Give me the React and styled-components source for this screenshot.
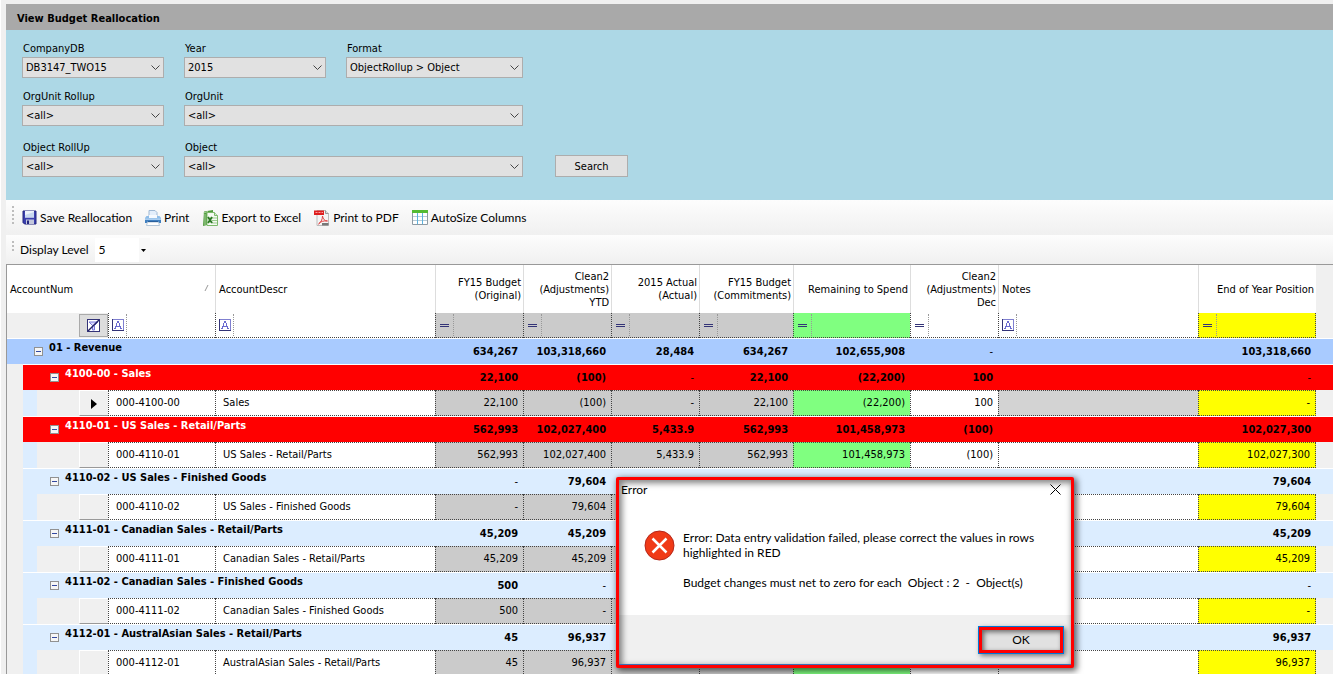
import { useState } from 'react';
import styled, { createGlobalStyle } from 'styled-components';

const GlobalStyle = createGlobalStyle`
  * {
    box-sizing: border-box;
  }

  body {
    margin: 0;
    background: #f0f0f0;
    color: #000;
    font-family: "DejaVu Sans Condensed", "DejaVu Sans", sans-serif;
    font-size: 11px;
    line-height: 13px;
  }

  button, select, input {
    font: inherit;
    color: inherit;
  }
`;

const Page = styled.main`
  display: flex;
  flex-direction: column;
  height: 100vh;
  padding: 4px 0 0 5px;
  border-left: 1px solid #fff;
  overflow: hidden;
`;

const Title = styled.h1`
  flex: none;
  margin: 0;
  padding: 8px 11px 5px;
  background: #a9a9a9;
  font-size: 11px;
  line-height: 13px;
`;

const Filters = styled.form`
  flex: none;
  display: grid;
  grid-template-columns: 142px 142px 177px auto;
  grid-template-rows: 36px 39px 36px;
  justify-content: start;
  align-items: start;
  column-gap: 20px;
  row-gap: 12px;
  padding: 12px 16px 23px;
  background: #add8e6;
`;

const Field = styled.div`
  display: flex;
  flex-direction: column;
  gap: 2px;
  grid-column: span ${({ $span }) => $span || 1};

  label {
    padding: 0 1px;
    line-height: 13px;
  }
`;

const SelectBox = styled.div`
  position: relative;

  select {
    appearance: none;
    display: block;
    width: 100%;
    height: 21px;
    padding: 0 20px 0 3px;
    border: 1px solid #adadad;
    border-radius: 0;
    background: #e1e1e1;
  }

  svg {
    position: absolute;
    top: 8px;
    right: 4px;
    pointer-events: none;
  }
`;

const SearchButton = styled.button`
  align-self: end;
  width: 73px;
  height: 22px;
  margin-left: 12px;
  padding: 0;
  border: 1px solid #adadad;
  background: #e1e1e1;
`;

const Toolbar = styled.div`
  flex: none;
  display: flex;
  align-items: center;
  gap: ${({ $gap }) => $gap};
  height: ${({ $height }) => $height};
  padding-left: 6px;
  background: linear-gradient(#fdfdfd, #f0f0f0);
  font-family: Lato, "Open Sans", sans-serif;
  font-size: 12px;
  line-height: 16px;
`;

const Grip = styled.span`
  align-self: flex-start;
  width: 2px;
  height: ${({ $height }) => $height};
  margin-top: 6px;
  background: repeating-linear-gradient(#bdbdbd 0 2px, transparent 2px 4px);
`;

const Tools = styled.div`
  display: flex;
  align-items: center;
  gap: 13px;
`;

const Tool = styled.button`
  display: flex;
  align-items: center;
  gap: 3px;
  padding: 0;
  border: 0;
  background: none;
`;

const LevelBox = styled.div`
  position: relative;

  select {
    appearance: none;
    width: 55px;
    height: 24px;
    padding: 0 4px;
    border: 0;
    background: linear-gradient(to right, #fff 44px, #f8f8f8 44px);
  }

  svg {
    position: absolute;
    top: 11px;
    right: 4px;
    pointer-events: none;
  }
`;

const GridPanel = styled.section`
  flex: 1;
  min-height: 0;
  overflow: hidden;
  border-top: 1px solid #999;
  border-left: 1px solid #999;
`;

const Table = styled.table`
  width: 100%;
  table-layout: fixed;
  border-collapse: separate;
  border-spacing: 0;

  th, td {
    padding: 0;
  }
`;

const HeadCell = styled.th`
  height: 48px;
  padding: 0 2px 0 3px !important;
  border-left: ${({ $first }) => ($first ? 0 : '1px solid #ddd')};
  background: #fff;
  font-weight: 400;
  text-align: ${({ $align }) => $align || 'right'};
  white-space: pre-line;
`;

const SortHead = styled.div`
  display: flex;
  justify-content: space-between;
  padding-right: 4px;
`;

const FilterCell = styled.td`
  height: 25px;
  border-left: 1px dotted #444;
  border-bottom: 1px dotted #444;
  border-right: ${({ $last }) => ($last ? '1px dotted #444' : 0)};
  background: ${({ $fill }) => $fill || '#fff'};
`;

const Operator = styled.button`
  display: flex;
  align-items: center;
  justify-content: center;
  width: 18px;
  height: 22px;
  padding: 0;
  border: 0;
  border-right: 1px dotted #999;
  background: none;
`;

const ClearFilter = styled.button`
  display: flex;
  align-items: center;
  justify-content: center;
  width: 100%;
  height: 23px;
  padding: 0;
  border: 1px solid #aaa;
  background: #ddd;
`;

const GroupRow = styled.tr`
  font-weight: 700;

  td {
    height: 26px;
    padding-right: 5px;
    border-top: 1px solid #fff;
    background: ${({ $fill }) => $fill};
    text-align: right;
  }

  td.indent {
    border-top: 0;
    background: #f0f0f0;
  }

  td.empty {
    font-weight: 400;
  }
`;

const GroupLabel = styled.div`
  display: flex;
  gap: 6px;
  height: 25px;
  padding: 2px 0 0 27px;
  color: ${({ $light }) => ($light ? '#fff' : '#000')};
  white-space: nowrap;

  button {
    display: block;
    width: 9px;
    height: 9px;
    margin-top: 6px;
    padding: 0;
    border: 0;
    background: none;
  }

  svg {
    display: block;
  }
`;

const Indent = styled.td`
  background: ${({ $fill }) => $fill || '#f0f0f0'};
`;

const Selector = styled.td`
  border-top: 1px solid #fff;
  border-left: 1px solid #fff;
  border-bottom: 1px solid #999;
  background: #f0f0f0;

  svg {
    display: block;
    margin: 1px 0 0 11px;
  }
`;

const Cell = styled.td`
  height: 26px;
  padding: ${({ $text }) => ($text ? '0 0 2px 7px' : '0 5px 2px 0')} !important;
  border: 1px dotted #444;
  border-right-width: ${({ $last }) => ($last ? '1px' : 0)};
  background: ${({ $fill }) => $fill || '#fff'};
  text-align: ${({ $text }) => ($text ? 'left' : 'right')};
  white-space: nowrap;
`;

const Dialog = styled.div`
  position: absolute;
  top: 477px;
  left: 616px;
  display: flex;
  flex-direction: column;
  width: 458px;
  height: 191px;
  border: 3px solid #f00;
  border-radius: 2px;
  background: #fff;
  box-shadow: 2px 2px 6px 1px rgba(0, 0, 0, .6), inset 2px 2px 6px 1px rgba(0, 0, 0, .5);
  font-family: Lato, "Open Sans", sans-serif;
  font-size: 12px;
  line-height: 15px;
`;

const DialogTitle = styled.div`
  display: flex;
  justify-content: space-between;
  align-items: center;
  padding: 2px 10px 2px 2px;

  button {
    display: flex;
    padding: 0;
    border: 0;
    background: none;
  }
`;

const DialogBody = styled.div`
  flex: 1;
  display: flex;
  gap: 8px;
  padding: 31px 8px 0 25px;

  p {
    margin: 0 0 15px;
    white-space: pre-wrap;
  }
`;

const DialogFooter = styled.div`
  display: flex;
  justify-content: flex-end;
  align-items: center;
  height: 50px;
  padding-right: 8px;
  border-bottom: 1px solid #3c6eb4;
  background: rgba(0, 0, 0, .06);
`;

const OkButton = styled.button`
  width: 84px;
  height: 26px;
  padding: 0;
  border: 3px solid #f00;
  background: #e1e1e1;
  box-shadow: 0 0 0 1px #0078d7, 2px 2px 5px 1px rgba(0, 0, 0, .5), inset 2px 2px 5px rgba(0, 0, 0, .55);
`;

const GREY = '#cbcbcb';
const GREEN = '#80ff80';
const YELLOW = '#ffff00';

const widths = [16, 14, 42, 29, 107, 220, 88, 88, 88, 94, 117, 88, 200, 118];

const columns = [
  { name: 'FY15 Budget\n(Original)', fill: GREY },
  { name: 'Clean2\n(Adjustments)\nYTD', fill: GREY },
  { name: '2015 Actual\n(Actual)', fill: GREY },
  { name: 'FY15 Budget\n(Commitments)', fill: GREY },
  { name: 'Remaining to Spend', fill: GREEN },
  { name: 'Clean2\n(Adjustments)\nDec', fill: '#fff' },
  { name: 'Notes', fill: '#fff', text: true },
  { name: 'End of Year Position', fill: YELLOW },
];

const revenue = ['634,267', '103,318,660', '28,484', '634,267', '102,655,908', '-', '', '103,318,660'];

const accounts = [
  {
    group: '4100-00 - Sales',
    num: '000-4100-00',
    descr: 'Sales',
    values: ['22,100', '(100)', '-', '22,100', '(22,200)', '100', '', '-'],
    invalid: true,
    current: true,
  },
  {
    group: '4110-01 - US Sales - Retail/Parts',
    num: '000-4110-01',
    descr: 'US Sales - Retail/Parts',
    values: ['562,993', '102,027,400', '5,433.9', '562,993', '101,458,973', '(100)', '', '102,027,300'],
    invalid: true,
  },
  {
    group: '4110-02 - US Sales - Finished Goods',
    num: '000-4110-02',
    descr: 'US Sales - Finished Goods',
    values: ['-', '79,604', '', '', '', '', '', '79,604'],
  },
  {
    group: '4111-01 - Canadian Sales - Retail/Parts',
    num: '000-4111-01',
    descr: 'Canadian Sales - Retail/Parts',
    values: ['45,209', '45,209', '', '', '', '', '', '45,209'],
  },
  {
    group: '4111-02 - Canadian Sales - Finished Goods',
    num: '000-4111-02',
    descr: 'Canadian Sales - Finished Goods',
    values: ['500', '-', '', '', '', '', '', '-'],
  },
  {
    group: '4112-01 - AustralAsian Sales - Retail/Parts',
    num: '000-4112-01',
    descr: 'AustralAsian Sales - Retail/Parts',
    values: ['45', '96,937', '', '', '', '', '', '96,937'],
  },
];

function SaveIcon() {
  return (
    <svg width="15" height="15" viewBox="0 0 15 15">
      <path d="M1 1h13v13H2.500L1 12.500z" fill="#3b3fae" stroke="#24277f" />
      <path d="M3 1h9v6.500H3z" fill="#eef3fb" />
      <path d="M3 5l9-3v5.500H3z" fill="#c9d8f0" />
      <path d="M4 9.500h8V14H4z" fill="#c4c8dc" />
      <path d="M5 10.500h2V14H5z" fill="#24277f" />
    </svg>
  );
}

function PrintIcon() {
  return (
    <svg width="16" height="16" viewBox="0 0 16 16">
      <path d="M4 0.500h6l2 2V8H4z" fill="#e3eefb" stroke="#9fb8d4" />
      <path d="M1.500 6h13L16 8v5H0V8z" fill="#8fbde8" />
      <path d="M0 9h16v4H0z" fill="#3f7fc0" />
      <path d="M0 8.500h16v1.500H0z" fill="#a9cdf0" />
      <path d="M4 5h8v3H4z" fill="#f5f9fe" />
      <path d="M2.500 12h11l1 3.500h-13z" fill="#fff" stroke="#b4c6d8" />
      <path d="M3 11.500h10" stroke="#2a5f9c" />
    </svg>
  );
}

function ExcelIcon() {
  return (
    <svg width="16" height="16" viewBox="0 0 16 16">
      <path d="M2 1.500 11 0v3L5 4v11l-4 1z" fill="#4f9a3c" />
      <path d="M1.500 3 6 1.500M3 4v11" stroke="#a9d39c" />
      <path d="M5 2.500h7.500l3 3v10H5z" fill="#f6faf4" stroke="#7dba6c" />
      <path d="M12.500 2.500v3h3" fill="#d4e9cd" stroke="#7dba6c" />
      <path d="M10 8h5M10 10.500h5M10 13h5" stroke="#9ccb8f" />
      <path d="M6 7l4 6M10 7l-4 6" stroke="#2d7a25" strokeWidth="2" />
    </svg>
  );
}

function PdfIcon() {
  return (
    <svg width="16" height="16" viewBox="0 0 16 16">
      <path d="M3 0.500h8.500l3 3v12H3z" fill="#f4f4f4" stroke="#bbb" />
      <path d="M11.500 0.500v3h3" fill="#ddd" stroke="#999" />
      <path d="M0 0.500h10V5H0z" fill="#dd1f1f" />
      <path d="M1.500 2.500h2M4.500 2.500h2M7.500 2.500h1.500" stroke="#ff9d9d" />
      <path d="M8.500 6c0 4-2 6.500-4 8 2-2.500 5-3.500 9-3-3 0-4.500-2-5-5" fill="none" stroke="#e04343" />
      <path d="M8 13h6.500v2.500H8z" fill="#777" />
    </svg>
  );
}

function TableIcon() {
  return (
    <svg width="16" height="15" viewBox="0 0 16 15">
      <path d="M0.500 0.500h15v14H.5z" fill="#fff" stroke="#8d9aa3" />
      <path d="M0 0h16v3H0z" fill="#55bb33" />
      <path d="M1 6.500h14M1 10.500h14" stroke="#b9cbd6" />
      <path d="M5.500 3v11M10.500 3v11" stroke="#5bb2de" />
    </svg>
  );
}

function LetterIcon() {
  return (
    <svg width="12" height="12" viewBox="0 0 12 12" shapeRendering="crispEdges">
      <rect x="0.500" y="0.500" width="11" height="11" fill="#fff" stroke="#8080d0" />
      <path d="M.5 0v11.500H12" fill="none" stroke="#333377" />
      <path d="M3 9.500 5.500 2.500h1L9 9.500M4 7.500h4M2 9.500h2M7.500 9.500H10" fill="none" stroke="#6b6bd0" />
    </svg>
  );
}

function EqualsIcon() {
  return (
    <svg width="9" height="5" viewBox="0 0 9 5" shapeRendering="crispEdges">
      <path d="M0 1.500h9M0 3.500h9" stroke="#333377" />
    </svg>
  );
}

function ClearFilterIcon() {
  return (
    <svg width="13" height="13" viewBox="0 0 13 13">
      <rect x="0.500" y="0.500" width="12" height="12" fill="#fff" stroke="#333377" />
      <path d="M2 3h9L7.500 6.500V11H5.500V6.500z" fill="#dcdcff" stroke="#7777dd" />
      <path d="M1 12 12 1" stroke="#222266" strokeWidth="1.500" />
    </svg>
  );
}

function CollapseIcon() {
  return (
    <svg width="9" height="9" viewBox="0 0 9 9" shapeRendering="crispEdges">
      <rect x="0.500" y="0.500" width="8" height="8" fill="#f6f6f6" stroke="#919191" />
      <path d="M2 4.500h5" stroke="#3348a0" />
    </svg>
  );
}

function Combo({
  id, label, options, span,
}) {
  return (
    <Field $span={span}>
      <label htmlFor={id}>{label}</label>
      <SelectBox>
        <select id={id}>
          {options.map((option) => <option key={option}>{option}</option>)}
        </select>
        <svg width="9" height="6" viewBox="0 0 9 6">
          <path d="M.5.5l4 4 4-4" fill="none" stroke="#444" />
        </svg>
      </SelectBox>
    </Field>
  );
}

function GroupCells({ values }) {
  return (
    <>
      {values.map((value, index) => (
        <td key={columns[index].name} className={value === '-' ? 'empty' : undefined}>
          {value}
        </td>
      ))}
      <td />
    </>
  );
}

function Account({ account }) {
  const {
    group, num, descr, values, invalid, current,
  } = account;

  return (
    <>
      <GroupRow $fill={invalid ? '#f00' : '#dcedff'}>
        <td className="indent" />
        <td colSpan={5}>
          <GroupLabel $light={invalid}>
            <button type="button" aria-label="Collapse"><CollapseIcon /></button>
            {group}
          </GroupLabel>
        </td>
        <GroupCells values={values} />
      </GroupRow>
      <tr>
        <Indent />
        <Indent $fill="#dcedff" />
        <Indent />
        <Selector>
          {current
            ? (
              <svg width="6" height="10" viewBox="0 0 6 10">
                <path d="M0 0l6 5-6 5z" />
              </svg>
            )
            : null}
        </Selector>
        <Cell $text>{num}</Cell>
        <Cell $text>{descr}</Cell>
        {values.map((value, index) => (
          <Cell
            key={columns[index].name}
            $fill={current && columns[index].text ? '#d3d3d3' : columns[index].fill}
            $last={index === columns.length - 1}
          >
            {value}
          </Cell>
        ))}
        <Indent />
      </tr>
    </>
  );
}

export default function App() {
  const [open, setOpen] = useState(true);

  const handleClose = () => {
    setOpen(false);
  };

  const handleSearch = (event) => {
    event.preventDefault();
  };

  return (
    <Page>
      <GlobalStyle />
      <Title>View Budget Reallocation</Title>
      <Filters onSubmit={handleSearch}>
        <Combo id="company" label="CompanyDB" options={['DB3147_TWO15']} />
        <Combo id="year" label="Year" options={['2015']} />
        <Combo id="format" label="Format" options={['ObjectRollup > Object']} />
        <span />
        <Combo id="org-rollup" label="OrgUnit Rollup" options={['<all>']} />
        <Combo id="org-unit" label="OrgUnit" options={['<all>']} span={2} />
        <span />
        <Combo id="object-rollup" label="Object RollUp" options={['<all>']} />
        <Combo id="object" label="Object" options={['<all>']} span={2} />
        <SearchButton type="submit">Search</SearchButton>
      </Filters>
      <Toolbar $height="35px" $gap="8px">
        <Grip $height="18px" />
        <Tools>
          <Tool type="button">
            <SaveIcon />
            Save Reallocation
          </Tool>
          <Tool type="button">
            <PrintIcon />
            Print
          </Tool>
          <Tool type="button">
            <ExcelIcon />
            Export to Excel
          </Tool>
          <Tool type="button">
            <PdfIcon />
            Print to PDF
          </Tool>
          <Tool type="button">
            <TableIcon />
            AutoSize Columns
          </Tool>
        </Tools>
      </Toolbar>
      <Toolbar $height="29px" $gap="6px">
        <Grip $height="10px" />
        <label htmlFor="level">Display Level</label>
        <LevelBox>
          <select id="level">
            <option>5</option>
          </select>
          <svg width="5" height="3" viewBox="0 0 5 3">
            <path d="M0 0h5L2.500 3z" />
          </svg>
        </LevelBox>
      </Toolbar>
      <GridPanel>
        <Table>
          <colgroup>
            {/* eslint-disable-next-line react/no-array-index-key */}
            {widths.map((width, index) => <col key={index} width={width} />)}
            <col />
          </colgroup>
          <thead>
            <tr>
              <HeadCell colSpan={5} $align="left" $first>
                <SortHead>
                  AccountNum
                  <svg width="5" height="9" viewBox="0 0 5 9">
                    <path d="M1 8l3-6" stroke="#999" />
                  </svg>
                </SortHead>
              </HeadCell>
              <HeadCell $align="left">AccountDescr</HeadCell>
              {columns.map(({ name, text }) => (
                <HeadCell key={name} $align={text ? 'left' : 'right'}>{name}</HeadCell>
              ))}
              <td />
            </tr>
            <tr>
              <td colSpan={3} />
              <td>
                <ClearFilter type="button" aria-label="Clear filters">
                  <ClearFilterIcon />
                </ClearFilter>
              </td>
              <FilterCell>
                <Operator type="button" aria-label="Filter AccountNum"><LetterIcon /></Operator>
              </FilterCell>
              <FilterCell>
                <Operator type="button" aria-label="Filter AccountDescr"><LetterIcon /></Operator>
              </FilterCell>
              {columns.map(({ name, fill, text }, index) => (
                <FilterCell key={name} $fill={fill} $last={index === columns.length - 1}>
                  <Operator type="button" aria-label={`Filter ${name}`}>
                    {text ? <LetterIcon /> : <EqualsIcon />}
                  </Operator>
                </FilterCell>
              ))}
              <td />
            </tr>
          </thead>
          <tbody>
            <GroupRow $fill="#a9cbff">
              <td colSpan={6}>
                <GroupLabel>
                  <button type="button" aria-label="Collapse"><CollapseIcon /></button>
                  01 - Revenue
                </GroupLabel>
              </td>
              <GroupCells values={revenue} />
            </GroupRow>
            {accounts.map((account) => <Account key={account.num} account={account} />)}
          </tbody>
        </Table>
      </GridPanel>
      {open
        ? (
          <Dialog role="dialog" aria-labelledby="dialog-title">
            <DialogTitle>
              <span id="dialog-title">Error</span>
              <button type="button" aria-label="Close" onClick={handleClose}>
                <svg width="11" height="11" viewBox="0 0 11 11">
                  <path d="M.5.5l10 10M10.500.5l-10 10" stroke="#000" />
                </svg>
              </button>
            </DialogTitle>
            <DialogBody>
              <svg width="31" height="31" viewBox="0 0 31 31">
                <circle cx="15.500" cy="15.500" r="14.500" fill="#f03a17" stroke="#b5271a" />
                <path d="M8.500 8.500l14 14M22.500 8.500l-14 14" stroke="#fff" strokeWidth="2.500" />
              </svg>
              <div>
                <p>{'Error: Data entry validation failed, please correct the values in rows\nhighlighted in RED'}</p>
                <p>{'Budget changes must net to zero for each  Object : 2  -  Object(s)'}</p>
              </div>
            </DialogBody>
            <DialogFooter>
              <OkButton type="button" onClick={handleClose}>OK</OkButton>
            </DialogFooter>
          </Dialog>
        )
        : null}
    </Page>
  );
}
